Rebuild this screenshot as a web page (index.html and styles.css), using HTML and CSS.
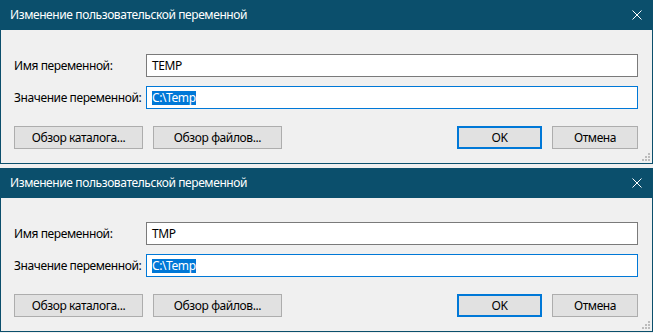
FILE: index.html
```html
<!DOCTYPE html>
<html lang="ru">
<head>
<meta charset="utf-8">
<title>Изменение пользовательской переменной</title>
<link rel="stylesheet" href="styles.css">
</head>
<body>
<div class="dialog">
  <div class="titlebar">
    <span class="title">Изменение пользовательской переменной</span>
    <svg class="close" width="10" height="10" viewBox="0 0 10 10"><path d="M0.5 0.5L9.5 9.5M9.5 0.5L0.5 9.5" stroke="#fff" stroke-width="1" fill="none"/></svg>
  </div>
  <div class="body">
    <div class="row">
      <span class="label">Имя переменной:</span>
      <div class="field">TEMP</div>
    </div>
    <div class="row">
      <span class="label">Значение переменной:</span>
      <div class="field focused"><span class="sel">C:\Temp</span></div>
    </div>
    <div class="buttons">
      <button class="btn wide">Обзор каталога...</button>
      <button class="btn wide">Обзор файлов...</button>
      <span class="spacer"></span>
      <button class="btn ok default">OK</button>
      <button class="btn cancel">Отмена</button>
    </div>
  </div>
  <svg class="grip" width="8" height="8" viewBox="0 0 8 8"><g fill="#bcbcbc"><rect x="6" y="0" width="2" height="2"/><rect x="3" y="3" width="2" height="2"/><rect x="6" y="3" width="2" height="2"/><rect x="0" y="6" width="2" height="2"/><rect x="3" y="6" width="2" height="2"/><rect x="6" y="6" width="2" height="2"/></g></svg>
</div>
<div class="dialog">
  <div class="titlebar">
    <span class="title">Изменение пользовательской переменной</span>
    <svg class="close" width="10" height="10" viewBox="0 0 10 10"><path d="M0.5 0.5L9.5 9.5M9.5 0.5L0.5 9.5" stroke="#fff" stroke-width="1" fill="none"/></svg>
  </div>
  <div class="body">
    <div class="row">
      <span class="label">Имя переменной:</span>
      <div class="field">TMP</div>
    </div>
    <div class="row">
      <span class="label">Значение переменной:</span>
      <div class="field focused"><span class="sel">C:\Temp</span></div>
    </div>
    <div class="buttons">
      <button class="btn wide">Обзор каталога...</button>
      <button class="btn wide">Обзор файлов...</button>
      <span class="spacer"></span>
      <button class="btn ok default">OK</button>
      <button class="btn cancel">Отмена</button>
    </div>
  </div>
  <svg class="grip" width="8" height="8" viewBox="0 0 8 8"><g fill="#bcbcbc"><rect x="6" y="0" width="2" height="2"/><rect x="3" y="3" width="2" height="2"/><rect x="6" y="3" width="2" height="2"/><rect x="0" y="6" width="2" height="2"/><rect x="3" y="6" width="2" height="2"/><rect x="6" y="6" width="2" height="2"/></g></svg>
</div>
</body>
</html>
```
FILE: styles.css
```css
* { box-sizing: border-box; }
html, body {
  margin: 0;
  padding: 0;
  background: #f0f0f0;
  font-family: "Noto Sans", "Open Sans", sans-serif;
  font-size: 12px;
  letter-spacing: -0.4px;
  color: #000;
  overflow: hidden;
}
.dialog {
  position: relative;
  width: 653px;
  height: 164px;
  margin-bottom: 4px;
  background: #f0f0f0;
  border: 1px solid #0b4f6c;
  border-top: none;
  display: flex;
  flex-direction: column;
}
.titlebar {
  height: 30px;
  background: #0b4f6c;
  display: flex;
  align-items: center;
  padding: 0 10px 0 9px;
  color: #fff;
}
.title {
  flex: 1;
  font-size: 12px;
  line-height: 16px;
  white-space: nowrap;
}
.close { display: block; }
.body {
  flex: 1;
  padding: 24px 14px 0 13px;
  display: flex;
  flex-direction: column;
}
.row {
  display: flex;
  align-items: center;
  height: 23px;
  margin-bottom: 9px;
}
.label {
  width: 132px;
  white-space: nowrap;
}
.field {
  flex: 1;
  height: 23px;
  border: 1px solid #7a7a7a;
  background: #fff;
  padding: 0 0 0 5px;
  display: flex;
  align-items: center;
  line-height: 15px;
}
.field.focused { border-color: #0078d7; }
.sel {
  background: #0078d7;
  color: #fff;
  line-height: 14px;
  height: 14px;
  display: inline-block;
}
.buttons {
  display: flex;
  gap: 10px;
  margin-top: 8px;
}
.spacer { flex: 1; }
.btn {
  height: 23px;
  padding: 0;
  background: #e1e1e1;
  border: 1px solid #adadad;
  font-family: inherit;
  font-size: 12px;
  letter-spacing: -0.4px;
  color: #000;
  border-radius: 0;
}
.btn.wide { width: 129px; }
.btn.ok { width: 85px; }
.btn.cancel { width: 86px; }
.btn.default { border: 2px solid #0078d7; }
.grip {
  position: absolute;
  right: 2px;
  bottom: 2px;
}
```
